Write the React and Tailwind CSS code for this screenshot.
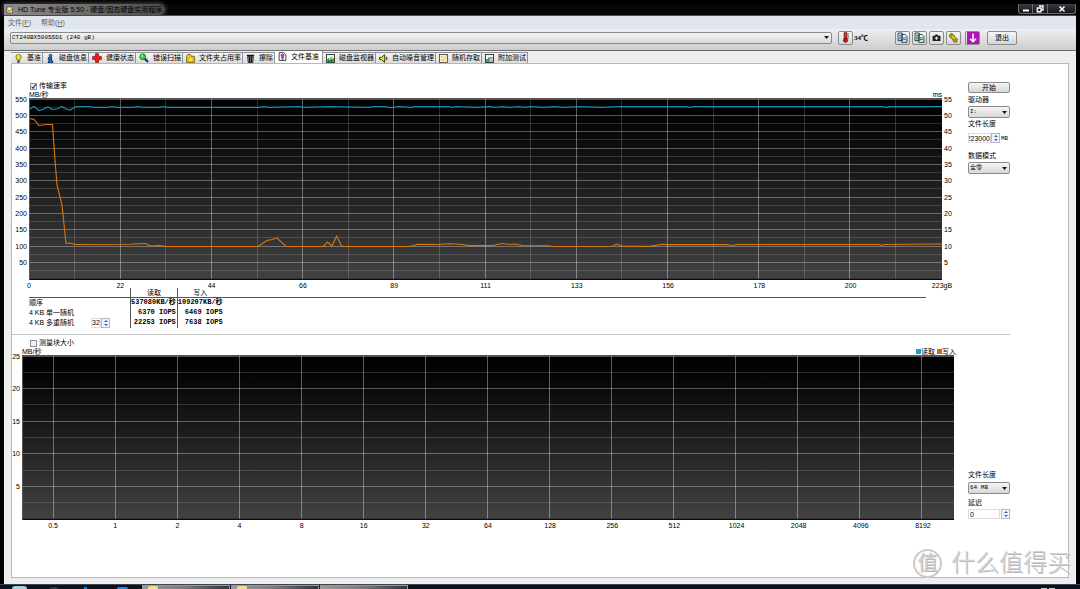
import React from "react";

const SANS = "font-['Liberation_Sans','Noto_Sans_CJK_SC',sans-serif]";
const MONO = "font-['Liberation_Mono','Noto_Sans_CJK_SC',monospace]";
const BTN =
  "flex items-center justify-center rounded-[2px] border border-[#8b8b8b] bg-linear-to-b from-[#f6f6f6] to-[#d6d6d6]";

/* ---------- icons ---------- */

function Icon({ children, className = "size-[9px]" }) {
  return (
    <svg viewBox="0 0 16 16" className={`shrink-0 ${className}`} aria-hidden="true">
      {children}
    </svg>
  );
}

const BulbIcon = () => (
  <Icon>
    <path d="M8 0.500C5 0.500 3.500 2.500 3.500 5c0 2 2 3 2 6h5c0-3 2-4 2-6 0-2.500-1.500-4.500-4.500-4.500z" fill="#f2e21b" stroke="#4a4500" strokeWidth="1.200" />
    <rect x="6" y="12" width="4" height="3.500" fill="#333" />
  </Icon>
);
const InfoIcon = () => (
  <Icon>
    <circle cx="8" cy="3" r="2.600" fill="#18a0f0" stroke="#013" strokeWidth="1.200" />
    <path d="M4 6.500h6v6h2V15.500H4v-3h2v-3H4z" fill="#1583e0" stroke="#013" strokeWidth="1.400" />
  </Icon>
);
const HealthIcon = () => (
  <Icon className="size-[10px]">
    <path d="M5.500 1h5v4.500H15v5h-4.500V15h-5v-4.500H1v-5h4.500z" fill="#ea1c1c" stroke="#7d0000" strokeWidth="1" />
  </Icon>
);
const ScanIcon = () => (
  <Icon className="size-[10px]">
    <path d="M9 9l5.500 5.500" stroke="#1c2bb8" strokeWidth="3.500" />
    <circle cx="6" cy="6" r="4.600" fill="#35dd35" stroke="#0a6a14" strokeWidth="1.400" />
    <circle cx="4.600" cy="4.600" r="1.400" fill="#c9ffc9" />
  </Icon>
);
const FolderIcon = () => (
  <Icon>
    <path d="M1 4l2-3h5L9.500 4H15v11H1z" fill="#f4cb2c" stroke="#6b5200" strokeWidth="1.400" />
    <path d="M4 7h8.500v6H4z" fill="#ffe65e" stroke="#b78c00" strokeWidth="1" />
  </Icon>
);
const EraseIcon = () => (
  <Icon>
    <path d="M3 4h10l-1 11H4z" fill="#999" stroke="#111" strokeWidth="1.500" />
    <path d="M1.500 2.500h13M6.500 5v9M9.500 5v9" stroke="#111" strokeWidth="2" />
  </Icon>
);
const FileBenchIcon = () => (
  <Icon>
    <path d="M2 1h8l4 4v10H2z" fill="#fff" stroke="#222" strokeWidth="1.500" />
    <path d="M8 3.500c-3 0-3.500 3-1.500 4.500V11h3V8c2-1.500 1.500-4.500-1.500-4.500z" fill="#c93be0" stroke="#4b0a58" />
    <path d="M6.500 13h3" stroke="#222" strokeWidth="1.500" />
  </Icon>
);
const MonitorIcon = () => (
  <Icon>
    <rect x="1" y="1" width="14" height="14" fill="#fbfbd0" stroke="#222" strokeWidth="1.500" />
    <path d="M2 14V9h2V7h2v3h2V5h2v4h2V7h2v7z" fill="#16b53c" />
    <path d="M4 14v-3h2v3zM9 14v-4h2v4z" fill="#1646d8" />
  </Icon>
);
const SpeakerIcon = () => (
  <Icon>
    <path d="M1 6h3.500L10 1v14l-5.500-5H1z" fill="#e8e01d" stroke="#3c3a00" strokeWidth="1.600" />
    <path d="M12 5l2.500 3L12 11" fill="none" stroke="#333" strokeWidth="1.800" />
  </Icon>
);
const RandomIcon = () => (
  <Icon>
    <rect x="1" y="1" width="14" height="14" fill="#fdf6c0" stroke="#444" strokeWidth="1.500" />
    <path d="M3.500 12l3-3M8 6l2 2M11 4l2-1.500M9.500 12l2-2" stroke="#ee8a1a" strokeWidth="1.700" />
    <path d="M4 5h2M7 11h1.500M12 7h1.500" stroke="#b655c8" strokeWidth="1.600" />
  </Icon>
);
const ExtraIcon = () => (
  <Icon>
    <rect x="1" y="1" width="14" height="14" fill="#fbfbd0" stroke="#222" strokeWidth="1.500" />
    <path d="M2 9h4v5H2z" fill="#18a83b" />
    <path d="M7 14V7h7" fill="none" stroke="#1646d8" strokeWidth="2" />
    <path d="M9 10h5v4H9z" fill="#aaa" />
  </Icon>
);

function PagesIcon({ color }) {
  return (
    <Icon className="size-[11px]">
      <path d="M1.500 1.500h6v11h-6zM7 3.500h4.500l3 3v8.500H7z" fill="#f4fbff" stroke="#1b2a3a" strokeWidth="1.300" />
      <path d="M3 5h3M3 7.500h3M3 10h3M8.500 8.500h4.500M8.500 11h4.500" stroke={color} strokeWidth="1.900" />
    </Icon>
  );
}

function Arrow() {
  return (
    <svg viewBox="0 0 5 3" className="pointer-events-none col-start-1 row-start-1 mr-[3px] h-[3px] w-[5px] self-center justify-self-end" aria-hidden="true">
      <path d="M0 0h5L2.500 3z" fill="#111" />
    </svg>
  );
}

/* ---------- form parts ---------- */

function Select({ label, value, className = "" }) {
  return (
    <div className={`grid ${className}`}>
      <select
        aria-label={label}
        defaultValue={value}
        className={`col-start-1 row-start-1 h-3 w-full appearance-none rounded-[2px] border border-[#8b8b8b] bg-linear-to-b from-[#f4f4f4] to-[#d9d9d9] px-px text-[6px] leading-[8px] text-black ${MONO}`}
      >
        <option>{value}</option>
      </select>
      <Arrow />
    </div>
  );
}

function CheckRow({ label, defaultChecked }) {
  return (
    <label className="ml-[18px] flex h-[10px] items-center gap-[2px]">
      <span className="grid">
        <input
          type="checkbox"
          defaultChecked={defaultChecked}
          className="peer col-start-1 row-start-1 size-[7px] appearance-none border border-[#8e9199] bg-[#f0f2f5]"
        />
        <svg viewBox="0 0 8 8" className="pointer-events-none invisible col-start-1 row-start-1 size-[7px] peer-checked:visible" aria-hidden="true">
          <path d="M1.800 4l1.700 2L6.500 1.500" fill="none" stroke="#233a8a" strokeWidth="1.300" />
        </svg>
      </span>
      {label}
    </label>
  );
}

function Spinner({ name }) {
  return (
    <span className="flex h-[10px] w-[9px] flex-col border border-[#b4b8c0] bg-[#f1f3f8]">
      <button type="button" aria-label={`${name} +`} className="flex h-1 items-center justify-center">
        <svg viewBox="0 0 4 2" className="h-[2px] w-1"><path d="M0 2h4L2 0z" fill="#3b5fc4" /></svg>
      </button>
      <button type="button" aria-label={`${name} -`} className="flex h-1 items-center justify-center">
        <svg viewBox="0 0 4 2" className="h-[2px] w-1"><path d="M0 0h4L2 2z" fill="#3b5fc4" /></svg>
      </button>
    </span>
  );
}

/* ---------- charts ---------- */

const READ =
  "0,11.500 5,8.500 10,12.500 15,11 19,9 23,11.500 28,11 33,8.500 37,11 41,12 47,8.500 60,8.500 65,9.300 78,9.300 83,8.500 88,9.300 103,9.300 108,8.500 116,9.300 130,9.300 134,8.500 138,9.300 230,9.300 235,8.500 240,9.300 270,8.500 276,9.300 300,8.500 340,9.300 344,8.500 355,8.500 362,9.600 370,8.500 383,9.300 386,8.500 420,8.500 423,9.300 427,8.500 448,9.300 462,8.500 466,9.300 474,8.500 480,9.300 490,8.500 496,9.300 502,8.500 515,9.300 526,8.500 534,9.300 552,8.500 572,9.300 589,8.500 658,8.500 661,9.300 665,8.500 855,8.500 857,9.500 860,8.500 913,8.500";
const WRITE =
  "0,20.500 5,21.500 10,27.500 18,26.500 23.500,26.500 26,62 28,87 33,107 37,145.500 41,145 46,146.500 101,146.300 116,145.500 122,148 131,147.500 136,148.500 229,148.500 238,142.500 243,141.500 248,140 257,148.500 294,148.500 298.500,144 303,148 307.500,138 312.500,148 316,148.500 381,148.500 389,146.300 408,146.500 421,145.800 434,146.500 440,147.600 464,147.500 473,145.500 481,146.500 486,146 493,147.500 519,147.700 524,148.500 583,148.300 588,146 593,148.300 621,148.400 633,146.300 638,146.600 698,146.500 702,147.500 709,146.500 850,146.500 852,147.500 855,146.500 913,146";

function Grid({ width, height, xs, minorXs, ys, minorYs, children, className, id }) {
  return (
    <svg viewBox={`0 0 ${width} ${height}`} preserveAspectRatio="none" className={className} role="img">
      <defs>
        <linearGradient id={id} x1="0" y1="0" x2="0" y2="1">
          <stop offset="0" stopColor="#000" />
          <stop offset="0.150" stopColor="#060606" />
          <stop offset="1" stopColor="#424242" />
        </linearGradient>
      </defs>
      <rect width={width} height={height} fill={`url(#${id})`} />
      {minorXs.map((x) => (
        <path key={x} d={`M${x} 0V${height}`} stroke="#fff" strokeOpacity="0.180" />
      ))}
      {minorYs.map((y) => (
        <path key={y} d={`M0 ${y}H${width}`} stroke="#fff" strokeOpacity="0.150" />
      ))}
      {ys.map((y) => (
        <path key={y} d={`M0 ${y}H${width}`} stroke="#fff" strokeOpacity="0.320" />
      ))}
      {xs.map((x) => (
        <path key={x} d={`M${x} 0V${height}`} stroke="#fff" strokeOpacity="0.360" />
      ))}
      {children}
      <path d={`M0 ${height - 0.500}H${width}`} stroke="#0a0a0a" strokeWidth="1.500" />
      <path d={`M0 0.500H${width}M0.500 0V${height}`} stroke="#555" />
    </svg>
  );
}

const range = (n) => Array.from({ length: n }, (_, i) => i);
const line = (v) => Math.floor(v) + 0.5;

function YLabels({ values, className }) {
  return (
    <div className={`flex flex-col justify-between ${className}`}>
      {values.map((v, i) => (
        <span key={i} className="flex h-0 items-center leading-none">{v}</span>
      ))}
    </div>
  );
}

function TransferChart() {
  return (
    <div className="grid grid-cols-[17px_minmax(0,1fr)_12px]">
      <YLabels values={[550, 500, 450, 400, 350, 300, 250, 200, 150, 100, 50, ""]} className="items-end py-px pr-[2px]" />
      <Grid
        id="transfer-bg"
        className="h-[182px] w-full"
        width={913}
        height={182}
        xs={range(9).map((i) => line((i + 1) * 91.2))}
        minorXs={range(10).map((i) => line((i + 0.5) * 91.2))}
        ys={range(11).map((i) => line(1 + i * 16.35))}
        minorYs={range(11).map((i) => line(1 + (i + 0.5) * 16.35))}
      >
        <polyline points={READ} fill="none" stroke="#1590b8" strokeWidth="1.200" />
        <polyline points={WRITE} fill="none" stroke="#d9780f" strokeWidth="1.100" />
      </Grid>
      <YLabels values={[55, 50, 45, 40, 35, 30, 25, 20, 15, 10, 5, ""]} className="items-start py-px pl-[2px]" />
      <div className="col-start-2 flex h-2 items-center justify-between pt-[2px]">
        {["0", "22", "44", "66", "89", "111", "133", "156", "178", "200", "223gB"].map((v) => (
          <span key={v} className="flex w-0 justify-center leading-none">{v}</span>
        ))}
      </div>
    </div>
  );
}

function BlockChart() {
  return (
    <div className="grid grid-cols-[10px_minmax(0,1fr)]">
      <YLabels values={[25, 20, 15, 10, 5, ""]} className="items-end py-px pr-[2px]" />
      <Grid
        id="block-bg"
        className="h-[165px] w-full"
        width={932}
        height={165}
        xs={range(15).map((i) => line(31 + i * 62))}
        minorXs={[]}
        ys={range(5).map((i) => line(1 + i * 32.6))}
        minorYs={range(5).map((i) => line(1 + (i + 0.5) * 32.6))}
      />
      <div className="col-start-2 grid grid-cols-15 pt-[2px] text-center leading-[8px]">
        {["0.5", 1, 2, 4, 8, 16, 32, 64, 128, 256, 512, 1024, 2048, 4096, 8192].map((v) => (
          <span key={v}>{v}</span>
        ))}
      </div>
    </div>
  );
}

/* ---------- page sections ---------- */

function TitleBar() {
  return (
    <header className="flex h-3 justify-between border-b border-[#4a4f55] bg-[#050608]">
      <div className="flex items-center gap-1 rounded-r-full bg-linear-to-r from-[#8d8d8d] via-[#6e6e6e] to-[#4a4a4a] pr-[3px] pl-[2px] shadow-[0_0_4px_1px_#444]">
        <Icon className="size-2">
          <rect x="2" y="2" width="11" height="12" fill="#f4ecc8" stroke="#222" />
          <path d="M4 12V7l3 2 5-6v5l-4 4z" fill="#d59a22" />
        </Icon>
        <h1 className="text-[7px] leading-[10px] whitespace-nowrap text-black">HD Tune 专业版 5.50 - 硬盘/固态硬盘实用程序</h1>
      </div>
      <div className="flex h-[10px] divide-x divide-[#6b6e73] rounded-b-[3px] border border-t-0 border-[#6b6e73] bg-linear-to-b from-[#3a3c40] to-[#15161a]">
        <button type="button" aria-label="最小化" className="flex w-[14px] items-center justify-center">
          <Icon className="h-2 w-2"><path d="M2 9h12v4H2z" fill="#fff" /></Icon>
        </button>
        <button type="button" aria-label="还原" className="flex w-[15px] items-center justify-center">
          <Icon className="h-2 w-2"><path d="M6 2h8v8h-3M2.500 6H10v7.500H2.500z" fill="none" stroke="#fff" strokeWidth="2.600" /></Icon>
        </button>
        <button type="button" aria-label="关闭" className="flex w-[27px] items-center justify-center">
          <Icon className="h-2 w-2"><path d="M3 3l10 10M13 3L3 13" stroke="#fff" strokeWidth="3.200" /></Icon>
        </button>
      </div>
    </header>
  );
}

function Toolbar() {
  return (
    <div className="flex h-[22px] items-center border-b border-[#6c6c6c] bg-linear-to-b from-[#efefef] to-[#cdcdcd] pr-[59px] pb-[4px] pl-[6px]">
      <Select label="硬盘" value="CT240BX500SSD1 (240 gB)" className="flex-1" />
      <button type="button" aria-label="温度" className={`ml-[6px] h-[14px] w-[15px] ${BTN}`}>
        <Icon className="size-[11px]">
          <path d="M6 1h4v9H6z" fill="#e33" stroke="#400" />
          <circle cx="8" cy="12" r="3" fill="#d11" stroke="#400" />
          <path d="M11 3h2M11 6h2M11 9h2" stroke="#222" />
        </Icon>
      </button>
      <span className="ml-px w-[25px] font-['Liberation_Serif','Noto_Sans_CJK_SC',serif] text-[7px] font-bold">34℃</span>
      <div className="ml-4 flex gap-[2px]">
        <button type="button" aria-label="复制文本" className={`h-[14px] w-[15px] ${BTN}`}><PagesIcon color="#2b8be0" /></button>
        <button type="button" aria-label="复制图像" className={`h-[14px] w-[15px] ${BTN}`}><PagesIcon color="#18a038" /></button>
        <button type="button" aria-label="截图" className={`h-[14px] w-[15px] ${BTN}`}>
          <Icon>
            <path d="M1 5h4l1-2.500h4L11 5h4v9H1z" fill="#222" />
            <path d="M8 6.500v5.500M5.200 9.200h5.600" stroke="#dff3df" strokeWidth="2.200" />
          </Icon>
        </button>
        <button type="button" aria-label="选项" className={`h-[14px] w-[15px] ${BTN}`}>
          <Icon className="size-[11px]">
            <path d="M2 4l3-2 4 3 1 3 4 3-2 4-4-1-1-4-4-2z" fill="#dccb1e" stroke="#5c5200" strokeWidth="1.300" />
            <circle cx="5.500" cy="5" r="1.200" fill="#5c5200" />
            <circle cx="10.500" cy="11.500" r="1.200" fill="#5c5200" />
          </Icon>
        </button>
      </div>
      <button type="button" aria-label="保存" className={`ml-1 h-[14px] w-[15px] ${BTN}`}>
        <Icon className="size-[12px]">
          <rect width="16" height="16" fill="#b012b4" />
          <path d="M8 2v11M4 9l4 4 4-4" fill="none" stroke="#fff" strokeWidth="2" />
        </Icon>
      </button>
      <button type="button" className={`ml-[7px] h-[14px] w-[30px] ${BTN}`}>退出</button>
    </div>
  );
}

const TABS = [
  ["基准", BulbIcon],
  ["磁盘信息", InfoIcon],
  ["健康状态", HealthIcon],
  ["错误扫描", ScanIcon],
  ["文件夹占用率", FolderIcon],
  ["擦除", EraseIcon],
  ["文件基准", FileBenchIcon],
  ["磁盘监视器", MonitorIcon],
  ["自动噪音管理", SpeakerIcon],
  ["随机存取", RandomIcon],
  ["附加测试", ExtraIcon],
];

function Tabs() {
  return (
    <div role="tablist" className="flex h-3 items-end">
      {TABS.map(([name, TabIcon]) => {
        const active = name === "文件基准";
        return (
          <button
            key={name}
            type="button"
            role="tab"
            aria-selected={active}
            className={`flex items-center gap-1 border-r border-[#8e939b] pl-[3px] whitespace-nowrap ${
              active ? "h-3 bg-white pr-[3px] pb-px" : "h-[11px] border-t bg-linear-to-b from-[#f4f4f4] to-[#dcdcdc] pr-px"
            }`}
          >
            <TabIcon />
            {name}
          </button>
        );
      })}
    </div>
  );
}

const RESULTS = [
  ["顺序", "537080KB/秒", "109207KB/秒"],
  ["4 KB 单一随机", "6370 IOPS", "6469 IOPS"],
  ["4 KB 多重随机", "22253 IOPS", "7638 IOPS"],
];

function ResultsTable() {
  return (
    <table className="mr-7 ml-[17px] table-fixed border-collapse leading-[9px]">
      <colgroup>
        <col className="w-[101px]" />
        <col className="w-[47px]" />
        <col className="w-[47px]" />
        <col />
      </colgroup>
      <thead>
        <tr className="h-[9px] border-b border-[#555]">
          <th className="p-0" />
          <th className="border-x border-[#555] p-0 text-center font-normal">读取</th>
          <th className="p-0 text-center font-normal">写入</th>
          <th className="w-full p-0" />
        </tr>
      </thead>
      <tbody>
        {RESULTS.map(([name, read, write], i) => (
          <tr key={name} className="h-[10px]">
            <th scope="row" className="p-0 text-left font-normal">
              <div className="flex w-[101px] items-center whitespace-nowrap">
                <span className="w-[62px]">{name}</span>
                {i === 2 && (
                  <span className="flex items-center">
                    <input aria-label="队列深度" defaultValue="32" className="h-[10px] w-[10px] border border-[#ddd] p-0 text-[7px]" />
                    <Spinner name="队列深度" />
                  </span>
                )}
              </div>
            </th>
            <td className={`w-[47px] border-x border-[#555] p-0 pr-px text-right font-bold whitespace-nowrap ${MONO}`}>{read}</td>
            <td className={`w-[47px] p-0 text-right font-bold whitespace-nowrap ${MONO}`}>{write}</td>
            <td className="p-0" />
          </tr>
        ))}
      </tbody>
    </table>
  );
}

function TransferSection() {
  return (
    <section className="flex h-[270px] gap-[14px] pt-[17px]">
      <div className="min-w-0 flex-1">
        <CheckRow label="传输速率" defaultChecked />
        <div className="mr-3 ml-[17px] flex h-[7px] items-center justify-between leading-[7px]">
          <span>MB/秒</span>
          <span>ms</span>
        </div>
        <TransferChart />
        <ResultsTable />
      </div>
      <aside className="flex w-[42px] shrink-0 flex-col leading-[8px]">
        <button type="button" className={`mt-px h-[11px] ${BTN}`}>开始</button>
        <span className="mt-[3px]">驱动器</span>
        <Select label="驱动器" value="I:" className="mt-[2px]" />
        <label htmlFor="len" className="mt-[2px]">文件长度</label>
        <div className="mt-[5px] flex items-center">
          <input id="len" defaultValue="223000" dir="rtl" className="h-[10px] w-[23px] border border-[#ddd] p-0 text-[7px]" />
          <Spinner name="文件长度" />
          <span className={`pt-[2px] pl-px text-[6px] ${MONO}`}>MB</span>
        </div>
        <span className="mt-[9px]">数据模式</span>
        <Select label="数据模式" value="全零" className="mt-[2px]" />
      </aside>
    </section>
  );
}

function BlockSection() {
  return (
    <section className="flex gap-[14px] pt-[3px]">
      <div className="min-w-0 flex-1">
        <CheckRow label="测量块大小" />
        <div className="-mr-[2px] ml-[10px] flex h-[7px] items-center justify-between leading-[7px]">
          <span>MB/秒</span>
          <span className="flex items-center">
            <i className="size-[5px] bg-[#12a0dc]" />
            读取
            <i className="ml-[2px] size-[5px] bg-[#e0640a]" />
            写入
          </span>
        </div>
        <BlockChart />
      </div>
      <aside className="flex w-[42px] shrink-0 flex-col pt-[133px] leading-[8px]">
        <span>文件长度</span>
        <Select label="块文件长度" value="64 MB" className="mt-[3px]" />
        <label htmlFor="delay" className="mt-[5px]">延迟</label>
        <div className="mt-[2px] flex items-center justify-between">
          <input id="delay" defaultValue="0" className="h-[10px] w-8 border border-[#ddd] px-px text-[7px]" />
          <Spinner name="延迟" />
        </div>
      </aside>
    </section>
  );
}

function TaskItem({ folder }) {
  return (
    <div className="h-full w-[88px] border-x border-t border-[#999] bg-linear-to-r from-[#9b9b9b] via-[#77797c] to-[#33363c] pl-[5px]">
      {folder && <div className="h-full w-[10px] rounded-t-[2px] bg-[#efe08a]" />}
    </div>
  );
}

function Taskbar() {
  return (
    <footer className="flex h-[5px] items-end overflow-hidden border-t border-[#3c4650] bg-[#0a1420]">
      <div className="ml-3 h-[3px] w-[15px] rounded-t-full bg-[#a9cfe0]" />
      <div className="ml-[23px] h-[2px] w-2 rounded-t-full bg-[#2c3540]" />
      <div className="ml-[26px] h-[2px] w-[3px] bg-[#1b7fd0]" />
      <div className="ml-[30px] h-[2px] w-[11px] rounded-t-full bg-[#1992ea]" />
      <div className="ml-[14px] flex h-full gap-px">
        <TaskItem folder />
        <TaskItem folder />
        <TaskItem />
      </div>
      <div className="mr-[25px] ml-auto flex gap-[2px]">
        <i className="h-px w-[6px] bg-[#ccc]" />
        <i className="h-px w-[6px] bg-[#ccc]" />
      </div>
    </footer>
  );
}

function Watermark() {
  return (
    <div className="pointer-events-none absolute right-[9px] bottom-[11px] flex items-center gap-[9px] text-[#d2d2d2] [text-shadow:1px_1px_0_#b8b8b8,-1px_-1px_0_#fff]">
      <span className="flex size-[29px] items-center justify-center rounded-full border-2 border-[#cbcbcb] text-[20px] leading-none">值</span>
      <span className="text-[24px] leading-[30px] font-light">什么值得买</span>
    </div>
  );
}

export default function App() {
  return (
    <div className={`relative flex min-h-screen flex-col overflow-hidden bg-black pt-1 text-[7px] leading-[8px] text-black ${SANS}`}>
      <div className="mx-1 flex flex-1 flex-col bg-[#eeeeee]">
        <TitleBar />
        <nav className="flex h-[13px] items-center gap-[10px] bg-[#dfe6ee] pl-1 text-[#666]">
          <button type="button">文件(<u>F</u>)</button>
          <button type="button">帮助(<u>H</u>)</button>
        </nav>
        <Toolbar />
        <main className="flex flex-1 flex-col px-[7px] pb-[6px]">
          <Tabs />
          <div className="flex-1 border border-[#b3b8c2] bg-white pr-[58px]">
            <TransferSection />
            <hr className="border-[#c4c4c4]" />
            <BlockSection />
          </div>
        </main>
      </div>
      <Taskbar />
      <Watermark />
    </div>
  );
}
